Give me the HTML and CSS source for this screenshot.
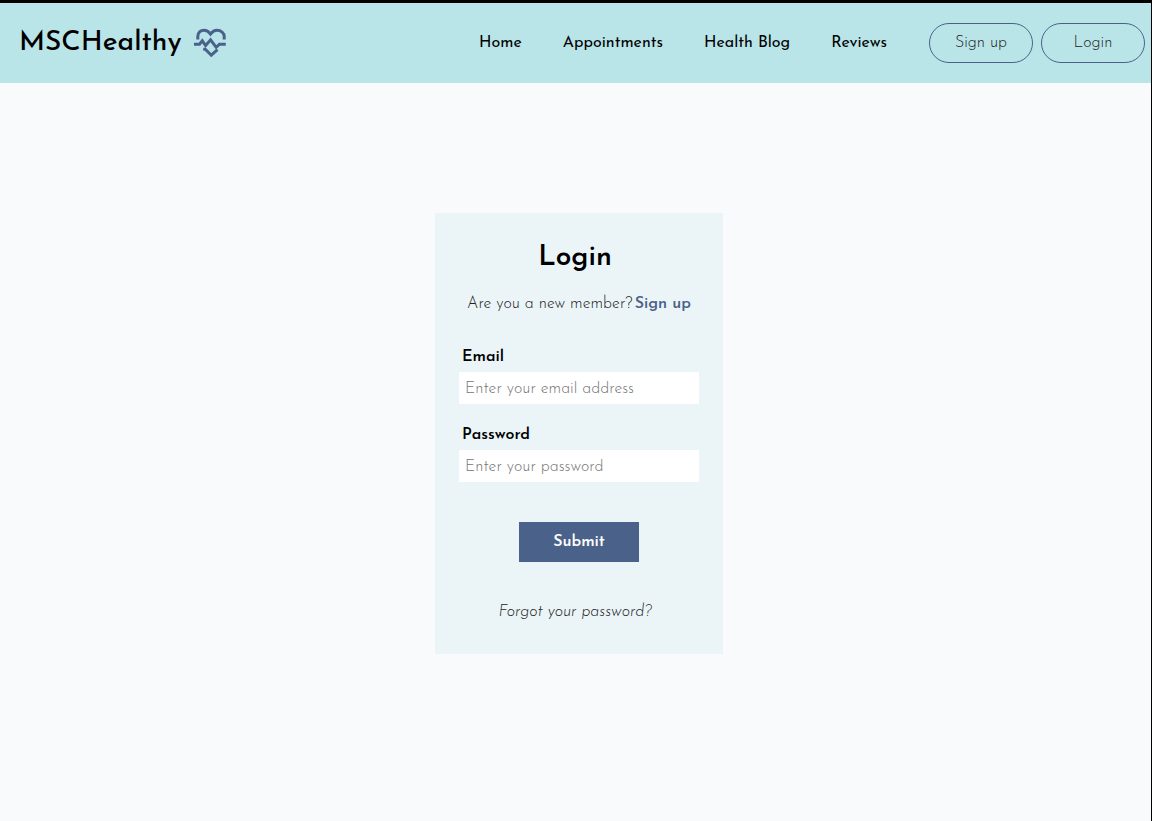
FILE: index.html
```html
<!DOCTYPE html>
<html lang="en">
<head>
<meta charset="utf-8">
<meta name="viewport" content="width=device-width, initial-scale=1">
<title>MSCHealthy - Login</title>
<link rel="stylesheet" href="styles.css">
</head>
<body>
<header class="navbar">
  <a class="brand" href="#">
    <span>MSCHealthy</span>
    <svg class="brand-icon" viewBox="0 0 34 32" aria-hidden="true">
      <path d="M4.800 12.500V9.500C4.800 5.500 7.500 3.300 11 3.300C14 3.300 16 5 17.500 7C19 5 21.200 3.300 24 3.300C28 3.300 31.200 6 31.200 9.500V12.500"/>
      <path d="M1 17.200H6.500L9.300 13.800L12.600 18.600L17.600 12.800L23.200 20.300L26.500 17.200H32.800"/>
      <path d="M10.200 22.200H12.300L18.300 28.200L24.500 22.600"/>
    </svg>
  </a>
  <nav class="links">
    <a href="#">Home</a>
    <a href="#">Appointments</a>
    <a href="#">Health Blog</a>
    <a href="#">Reviews</a>
  </nav>
  <div class="actions">
    <button class="pill" type="button">Sign up</button>
    <button class="pill" type="button">Login</button>
  </div>
</header>
<main class="page">
  <form class="card">
    <h1 class="title">Login</h1>
    <p class="prompt">Are you a new member?<a href="#">Sign up</a></p>
    <div class="field">
      <label for="email">Email</label>
      <input id="email" type="email" placeholder="Enter your email address">
    </div>
    <div class="field">
      <label for="password">Password</label>
      <input id="password" type="password" placeholder="Enter your password">
    </div>
    <button class="submit" type="submit">Submit</button>
    <a class="forgot" href="#">Forgot your password?</a>
  </form>
</main>
</body>
</html>
```

FILE: styles.css
```css
* {
  box-sizing: border-box;
}

body {
  margin: 0;
  min-height: 100vh;
  border-top: 3px solid #000;
  border-right: 1px solid #000;
  background: #f8fafc;
  color: #000;
  font-family: "Josefin Sans", Lato, sans-serif;
  font-size: 16px;
  line-height: 24px;
}

a {
  color: inherit;
  text-decoration: none;
}

button,
input {
  font: inherit;
}

.navbar {
  display: flex;
  align-items: center;
  height: 80px;
  padding: 0 6px 0 19px;
  background: #b9e5e8;
}

.brand {
  display: flex;
  align-items: center;
  gap: 12px;
  margin-right: auto;
  font-size: 28px;
  font-weight: 500;
}

.brand-icon {
  width: 34px;
  height: 32px;
  fill: none;
  stroke: #4a628a;
  stroke-width: 3;
}

.links {
  display: flex;
  gap: 41px;
  margin-right: 42px;
  font-weight: 400;
}

.actions {
  display: flex;
  gap: 8px;
}

.pill {
  width: 104px;
  height: 40px;
  padding: 0;
  border: 1px solid #4a628a;
  border-radius: 20px;
  background: transparent;
  color: #222;
  font-weight: 300;
}

.page {
  display: flex;
  justify-content: center;
  padding: 130px 0 40px 7px;
}

.card {
  display: flex;
  flex-direction: column;
  align-items: center;
  width: 288px;
  padding: 25px 24px 30px;
  background: #ebf5f8;
}

.title {
  margin: 0 8px 16px 0;
  font-size: 28px;
  font-weight: 600;
  line-height: 40px;
}

.prompt {
  display: flex;
  gap: 2px;
  margin: 0 0 29px;
  color: #222;
  font-weight: 300;
  line-height: 20px;
}

.prompt a {
  color: #4a628a;
  font-weight: 600;
}

.field {
  display: flex;
  flex-direction: column;
  width: 100%;
  margin-bottom: 17px;
}

.field label {
  padding: 2px 3px 3px;
  font-weight: 600;
}

.field input {
  width: 100%;
  height: 32px;
  padding: 1px 6px 0;
  border: 0;
  background: #fff;
  font-weight: 300;
}

.field input::placeholder {
  color: #757575;
}

.submit {
  width: 120px;
  height: 40px;
  margin: 23px 0 38px;
  padding: 0;
  border: 0;
  background: #4a628a;
  color: #fff;
  font-weight: 600;
}

.forgot {
  margin-right: 8px;
  color: #222;
  font-style: italic;
  font-weight: 300;
}
```
